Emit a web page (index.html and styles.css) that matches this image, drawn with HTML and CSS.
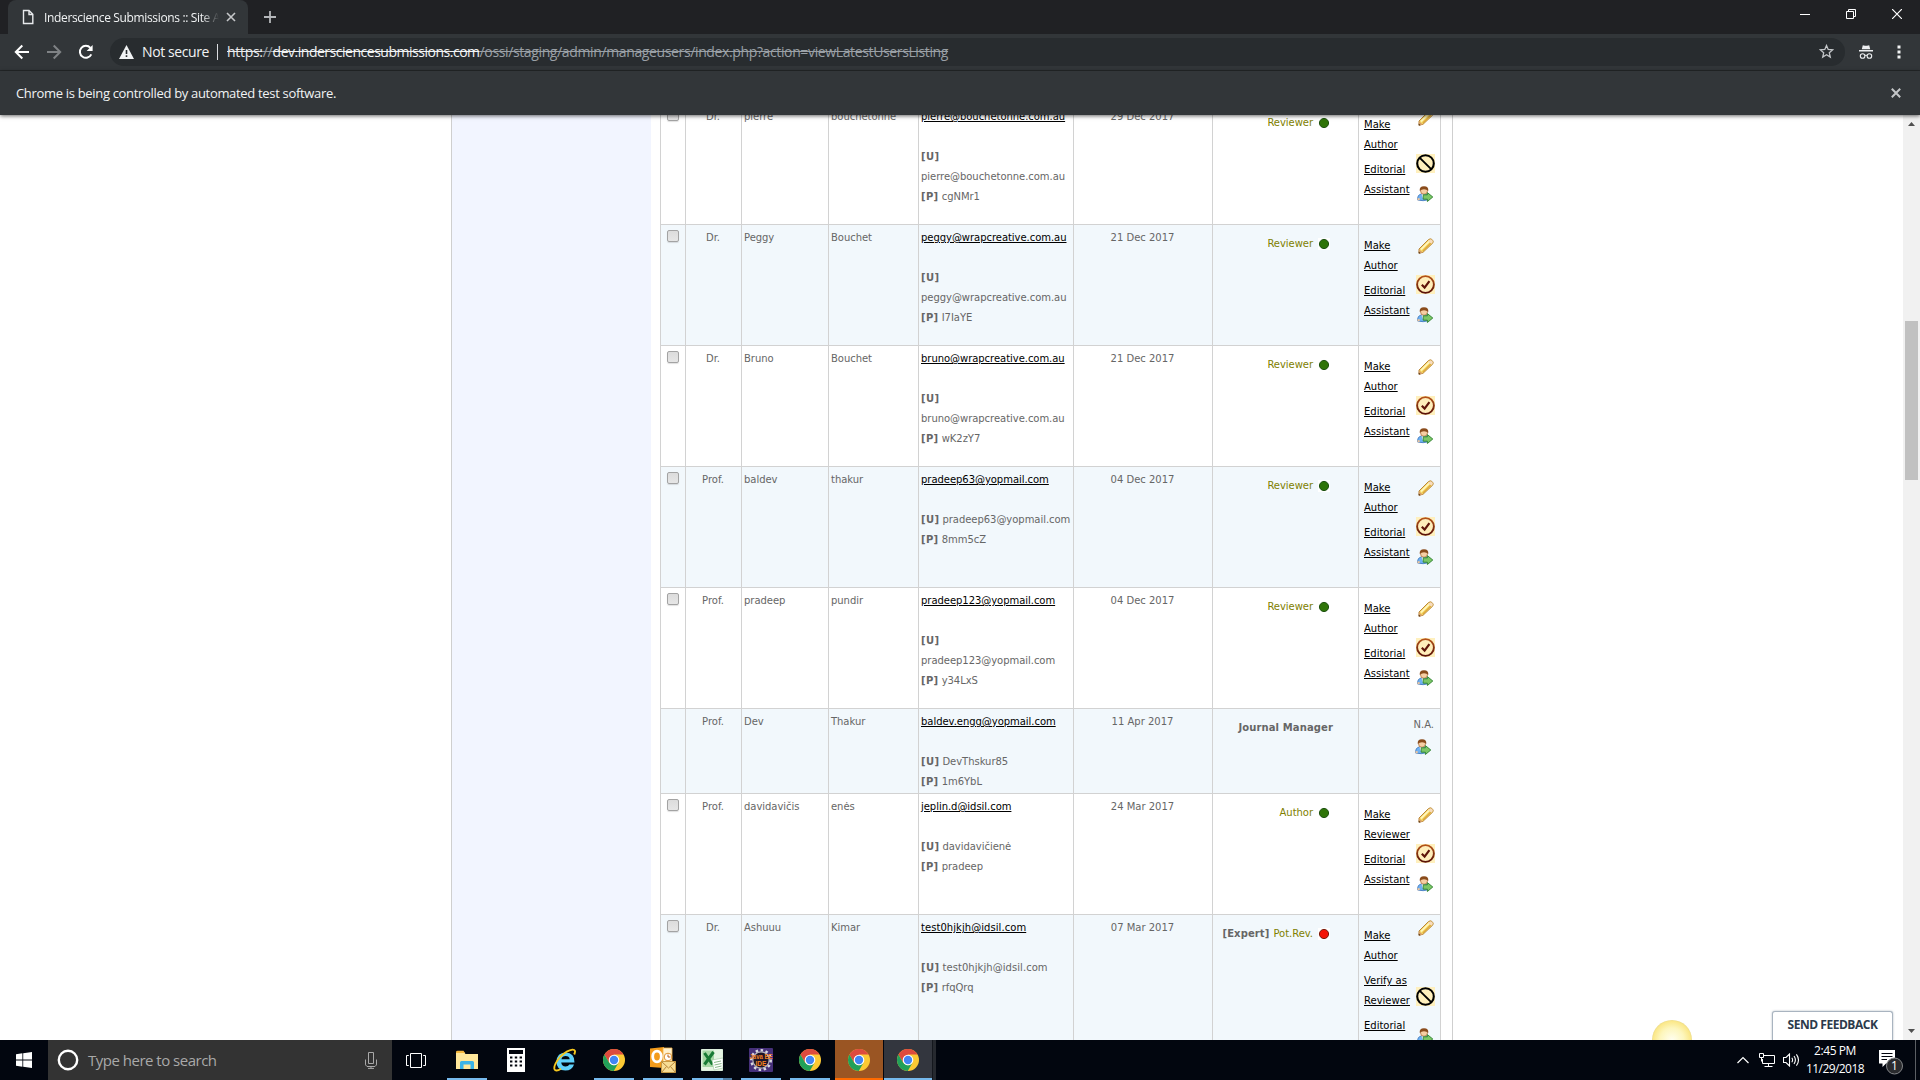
FILE: index.html
```html
<!DOCTYPE html>
<html lang="en">
<head>
<meta charset="utf-8">
<title>Inderscience Submissions :: Site Admin</title>
<link rel="stylesheet" href="styles.css">
</head>
<body>
<svg class="defs" width="0" height="0">
  <defs>
    <linearGradient id="rust" x1="0" y1="0" x2="0" y2="1"><stop offset="0" stop-color="#b5541a"/><stop offset="1" stop-color="#5a1208"/></linearGradient>
    <radialGradient id="sun" cx=".5" cy=".5" r=".5"><stop offset="0" stop-color="#fffef0"/><stop offset=".6" stop-color="#fdf6bd"/><stop offset=".93" stop-color="#fbe88a"/><stop offset="1" stop-color="#ecdc8c"/></radialGradient>
    <symbol id="pencil" viewBox="0 0 16 16">
      <path d="M1 11 10.5 1.5Q12.5.2 14 1.5 16 3 14.8 5L5 14.3 1 15.2z" fill="#f7dc6a" stroke="#b9863a"/>
      <path d="M3 11.5 11 3.5" stroke="#fff7c4" stroke-width="1.6"/><path d="M4.8 13 12.8 5" stroke="#dfa93c" stroke-width="1.2"/>
      <path d="M10.8 2.2Q12.5.8 13.8 1.8 15.4 3 14.4 4.7L13.3 5.6 10 3z" fill="#f7dcc0"/>
      <path d="M1 11.2 4.8 14.6 1 15.5z" fill="#d9a066"/><path d="M.7 13.6 2.6 15.3.7 15.6z" fill="#4a2c10"/>
    </symbol>
    <symbol id="check" viewBox="0 0 19 19">
      <rect width="19" height="19" fill="#fff0bd"/><circle cx="9.5" cy="9.5" r="8.4" fill="#ffeebb" stroke="url(#rust)" stroke-width="1.9"/>
      <path d="M5.8 9.8 8.6 12.6 13.4 6.2" fill="none" stroke="#5e1409" stroke-width="2.2"/>
    </symbol>
    <symbol id="ban" viewBox="0 0 19 19">
      <rect width="19" height="19" fill="#fff0bd"/><circle cx="9.5" cy="9.5" r="8.3" fill="none" stroke="#000" stroke-width="2.1"/><path d="M3.8 3.8 15.2 15.2" stroke="#000" stroke-width="1.9"/>
    </symbol>
    <symbol id="person" viewBox="0 0 16 16">
      <path d="M.6 14Q.2 9 4 8H9.5Q12 8.5 12 13.5 6 15.6.6 14z" fill="#6fb1f2" stroke="#3a72b8" stroke-width=".8"/>
      <path d="M.5 12.2h2.2v2H.5z" fill="#f3c79c"/><path d="M4.5 8.2h4L6.2 13z" fill="#fff"/>
      <circle cx="7" cy="4.8" r="3.5" fill="#f6cfa4" stroke="#a8652f" stroke-width=".7"/>
      <path d="M2.8 5Q2 .2 7 .2 12 .2 11.2 5 10 3.2 7 3.2 4 3.2 2.8 5z" fill="#8a4c1c"/>
      <path d="M6.2 8.8H10.4V6.6L15.8 11 10.4 15.5V13.2H6.2z" fill="#7cc766" stroke="#2f8130" stroke-width=".9"/>
    </symbol>
    <symbol id="green" viewBox="0 0 12 12"><rect width="12" height="12" fill="#fff"/><circle cx="6" cy="6" r="4.6" fill="#2f7408" stroke="#1f5212"/></symbol>
    <symbol id="red" viewBox="0 0 12 12"><rect width="12" height="12" fill="#fff"/><circle cx="6" cy="6" r="4.6" fill="#f51505" stroke="#7a1c0c"/></symbol>
    <symbol id="chrome" viewBox="0 0 24 24">
      <circle cx="12" cy="12" r="11" fill="#fcc934"/>
      <path d="M12 1A11 11 0 0 1 21.6 6.6H12L7.2 14.8 2.4 6.6A11 11 0 0 1 12 1z" fill="#dd4b3e"/>
      <path d="M2.4 6.6 7.3 14.9 12 17.4 16.6 14.6 11.8 23A11 11 0 0 1 2.4 6.6z" fill="#21a05a"/>
      <circle cx="12" cy="12" r="5.3" fill="#fff"/><circle cx="12" cy="12" r="4.2" fill="#4285f4"/>
    </symbol>
  </defs>
</svg>

<div class="tabstrip">
  <div class="tab">
    <svg width="12" height="16" viewBox="0 0 12 16"><path d="M1.5 1.5h5.5l3.8 3.8v9.2H1.5zM7 1.5v4h3.8" fill="none" stroke="#e8eaed" stroke-width="1.4"/></svg>
    <span class="tab-title">Inderscience Submissions :: Site A</span>
    <svg class="tab-close" width="10" height="10" viewBox="0 0 10 10"><path d="M1 1 9 9M9 1 1 9" stroke="#c6c8ca" stroke-width="1.6"/></svg>
  </div>
  <svg class="newtab" width="12" height="12" viewBox="0 0 12 12"><path d="M6 0V12M0 6H12" stroke="#b4b7ba" stroke-width="1.8"/></svg>
  <div class="winbtns">
    <svg width="10" height="10" viewBox="0 0 10 10"><path d="M0 5.5H10" stroke="#fff"/></svg>
    <svg width="10" height="10" viewBox="0 0 10 10"><path d="M.5 2.5h7v7h-7zM2.5 2.5v-2h7v7h-2" fill="none" stroke="#fff"/></svg>
    <svg width="10" height="10" viewBox="0 0 10 10"><path d="M0 0 10 10M10 0 0 10" stroke="#fff" stroke-width="1.2"/></svg>
  </div>
</div>

<div class="toolbar">
  <svg width="16" height="16" viewBox="0 0 16 16"><path d="M15 8H2M8.3 1.5 1.8 8 8.3 14.5" fill="none" stroke="#fff" stroke-width="2"/></svg>
  <svg width="16" height="16" viewBox="0 0 16 16"><path d="M1 8H14M7.7 1.5 14.2 8 7.7 14.5" fill="none" stroke="#7f8285" stroke-width="2"/></svg>
  <svg width="16" height="16" viewBox="0 0 16 16"><path d="M13.3 10.4A6 6 0 1 1 12.4 3.8" fill="none" stroke="#fff" stroke-width="2"/><path d="M14.6 1V7H8.6z" fill="#fff"/></svg>
  <div class="omnibox">
    <svg width="15" height="14" viewBox="0 0 15 14"><path d="M7.5 0 15 14H0z" fill="#f1f3f4"/><path d="M7.5 5V9M7.5 10.2V12" stroke="#282c2f" stroke-width="1.6"/></svg>
    <span class="notsecure">Not secure</span>
    <span class="url"><s class="scheme">https:</s><s class="slashes">//</s><s class="host">dev.indersciencesubmissions.com</s><s class="path">/ossi/staging/admin/manageusers/index.php?action=viewLatestUsersListing</s></span>
    <svg class="star" width="15" height="15" viewBox="0 0 15 15"><path d="M7.5 1.5 9.2 5.5 13.6 5.9 10.3 8.8 11.3 13.1 7.5 10.8 3.7 13.1 4.7 8.8 1.4 5.9 5.8 5.5z" fill="none" stroke="#c3c6c9" stroke-width="1.3"/></svg>
  </div>
  <svg class="incog" width="14" height="14" viewBox="0 0 14 14"><path d="M3.8.2 6 .8H8L10.2.2 11.2 4.2H2.8zM0 5h14v1.5H0z" fill="#eceef0"/><path d="M6 10.5Q7 9.8 8 10.5" fill="none" stroke="#eceef0"/><circle cx="3.6" cy="11" r="2.3" fill="none" stroke="#eceef0" stroke-width="1.1"/><circle cx="10.4" cy="11" r="2.3" fill="none" stroke="#eceef0" stroke-width="1.1"/></svg>
  <svg width="4" height="14" viewBox="0 0 4 14"><path d="M.5.5h3v3h-3zM.5 5.5h3v3h-3zM.5 10.5h3v3h-3z" fill="#f1f3f4"/></svg>
</div>

<div class="infobar">
  <span>Chrome is being controlled by automated test software.</span>
  <svg width="10" height="10" viewBox="0 0 10 10"><path d="M.8.8 9.2 9.2M9.2.8.8 9.2" stroke="#c3c5c7" stroke-width="2"/></svg>
</div>

<div class="viewport">
  <div class="page">
    <div class="sidebar"></div>
    <div class="users">
      <div class="row">
        <div class="sel"><i class="cb"></i></div><div class="mid">Dr.</div><div>pierre</div><div>bouchetonne</div>
        <div><a>pierre@bouchetonne.com.au</a><br><br><b>[U]</b><br>pierre@bouchetonne.com.au<br><b>[P]</b> cgNMr1</div>
        <div class="mid">29 Dec 2017</div>
        <div class="role"><span>Reviewer</span><svg><use href="#green"/></svg></div>
        <div class="act"><div class="links"><a>Make<br>Author</a><a>Editorial<br>Assistant</a></div><div class="icons"><svg class="i16 raised"><use href="#pencil"/></svg><svg class="i19"><use href="#ban"/></svg><svg class="i16"><use href="#person"/></svg></div></div>
      </div>
      <div class="row alt">
        <div class="sel"><i class="cb"></i></div><div class="mid">Dr.</div><div>Peggy</div><div>Bouchet</div>
        <div><a>peggy@wrapcreative.com.au</a><br><br><b>[U]</b><br>peggy@wrapcreative.com.au<br><b>[P]</b> I7IaYE</div>
        <div class="mid">21 Dec 2017</div>
        <div class="role"><span>Reviewer</span><svg><use href="#green"/></svg></div>
        <div class="act"><div class="links"><a>Make<br>Author</a><a>Editorial<br>Assistant</a></div><div class="icons"><svg class="i16"><use href="#pencil"/></svg><svg class="i19"><use href="#check"/></svg><svg class="i16"><use href="#person"/></svg></div></div>
      </div>
      <div class="row">
        <div class="sel"><i class="cb"></i></div><div class="mid">Dr.</div><div>Bruno</div><div>Bouchet</div>
        <div><a>bruno@wrapcreative.com.au</a><br><br><b>[U]</b><br>bruno@wrapcreative.com.au<br><b>[P]</b> wK2zY7</div>
        <div class="mid">21 Dec 2017</div>
        <div class="role"><span>Reviewer</span><svg><use href="#green"/></svg></div>
        <div class="act"><div class="links"><a>Make<br>Author</a><a>Editorial<br>Assistant</a></div><div class="icons"><svg class="i16"><use href="#pencil"/></svg><svg class="i19"><use href="#check"/></svg><svg class="i16"><use href="#person"/></svg></div></div>
      </div>
      <div class="row alt">
        <div class="sel"><i class="cb"></i></div><div class="mid">Prof.</div><div>baldev</div><div>thakur</div>
        <div><a>pradeep63@yopmail.com</a><br><br><b>[U]</b> pradeep63@yopmail.com<br><b>[P]</b> 8mm5cZ</div>
        <div class="mid">04 Dec 2017</div>
        <div class="role"><span>Reviewer</span><svg><use href="#green"/></svg></div>
        <div class="act"><div class="links"><a>Make<br>Author</a><a>Editorial<br>Assistant</a></div><div class="icons"><svg class="i16"><use href="#pencil"/></svg><svg class="i19"><use href="#check"/></svg><svg class="i16"><use href="#person"/></svg></div></div>
      </div>
      <div class="row">
        <div class="sel"><i class="cb"></i></div><div class="mid">Prof.</div><div>pradeep</div><div>pundir</div>
        <div><a>pradeep123@yopmail.com</a><br><br><b>[U]</b><br>pradeep123@yopmail.com<br><b>[P]</b> y34LxS</div>
        <div class="mid">04 Dec 2017</div>
        <div class="role"><span>Reviewer</span><svg><use href="#green"/></svg></div>
        <div class="act"><div class="links"><a>Make<br>Author</a><a>Editorial<br>Assistant</a></div><div class="icons"><svg class="i16"><use href="#pencil"/></svg><svg class="i19"><use href="#check"/></svg><svg class="i16"><use href="#person"/></svg></div></div>
      </div>
      <div class="row alt short">
        <div class="sel"></div><div class="mid">Prof.</div><div>Dev</div><div>Thakur</div>
        <div><a>baldev.engg@yopmail.com</a><br><br><b>[U]</b> DevThskur85<br><b>[P]</b> 1m6YbL</div>
        <div class="mid">11 Apr 2017</div>
        <div class="role manager"><b>Journal Manager</b></div>
        <div class="act na"><span>N.A.</span><svg class="i16"><use href="#person"/></svg></div>
      </div>
      <div class="row">
        <div class="sel"><i class="cb"></i></div><div class="mid">Prof.</div><div>davidavičis</div><div>enės</div>
        <div><a>jeplin.d@idsil.com</a><br><br><b>[U]</b> davidavičienė<br><b>[P]</b> pradeep</div>
        <div class="mid">24 Mar 2017</div>
        <div class="role"><span>Author</span><svg><use href="#green"/></svg></div>
        <div class="act"><div class="links"><a>Make<br>Reviewer</a><a>Editorial<br>Assistant</a></div><div class="icons"><svg class="i16"><use href="#pencil"/></svg><svg class="i19"><use href="#check"/></svg><svg class="i16"><use href="#person"/></svg></div></div>
      </div>
      <div class="row alt tall">
        <div class="sel"><i class="cb"></i></div><div class="mid">Dr.</div><div>Ashuuu</div><div>Kimar</div>
        <div><a class="wide">test0hjkjh@idsil.com</a><br><br><b>[U]</b> <span class="wide">test0hjkjh@idsil.com</span><br><b>[P]</b> rfqQrq</div>
        <div class="mid">07 Mar 2017</div>
        <div class="role"><b>[Expert]</b><span>Pot.Rev.</span><svg><use href="#red"/></svg></div>
        <div class="act"><div class="links"><a>Make<br>Author</a><a>Verify as<br>Reviewer</a><a>Editorial</a></div><div class="icons"><svg class="i16"><use href="#pencil"/></svg><svg class="i19"><use href="#ban"/></svg><svg class="i16"><use href="#person"/></svg></div></div>
      </div>
    </div>
  </div>
  <div class="scrollbar">
    <svg width="17" height="17" viewBox="0 0 17 17"><path d="M5 11 8.5 7 12 11z" fill="#505050"/></svg>
    <div class="thumb"></div>
    <svg class="down" width="17" height="17" viewBox="0 0 17 17"><path d="M5 6 8.5 10 12 6z" fill="#505050"/></svg>
  </div>
  <svg class="sun" width="40" height="20" viewBox="0 0 40 20"><circle cx="20" cy="20" r="20" fill="url(#sun)"/></svg>
  <div class="feedback">SEND FEEDBACK</div>
</div>

<div class="taskbar">
  <div class="start"><svg width="16" height="16" viewBox="0 0 16 16"><path d="M0 2.2 6.4 1.3V7.6H0zM7.2 1.2 16 0V7.6H7.2zM0 8.4H6.4V14.7L0 13.8zM7.2 8.4H16V16L7.2 14.8z" fill="#fff"/></svg></div>
  <div class="search">
    <svg width="22" height="22" viewBox="0 0 22 22"><circle cx="11" cy="11" r="9.2" fill="none" stroke="#fff" stroke-width="2.4"/></svg>
    <span>Type here to search</span>
    <svg width="12" height="17" viewBox="0 0 12 17"><path d="M3.5.5h5v11h-5zM.5 7.5v5.4L2 14.5h8l1.5-1.6V7.5M6 14.5V16M3 16.4H9" fill="none" stroke="#a9a9a9"/></svg>
  </div>
  <div class="slot task"><svg width="20" height="15" viewBox="0 0 20 15"><path d="M4.5.5h11v14h-11zM2.8 2.5H.5v10h2.3M17.2 2.5h2.3v10h-2.3" fill="none" stroke="#fff"/></svg></div>
  <div class="slot run"><svg width="24" height="20" viewBox="0 0 24 20"><path d="M1 2H9l1.5 2H23V19H1z" fill="#ffe79a"/><path d="M1 2.2Q1 .8 2.5.8H8.5L10 3H1z" fill="#f6b73c"/><path d="M5 19V12.5Q5 11 6.5 11h11Q19 11 19 12.5V19H15.5V14.5H8.5V19z" fill="#3cb4e7"/></svg></div>
  <div class="slot"><svg width="18" height="24" viewBox="0 0 18 24"><path d="M0 0h18v24H0z" fill="#fff"/><path d="M2 2h14v4H2z" fill="#02050d"/><path d="M3 9.5h12M3 13.5h12M3 17.5h12" stroke="#02050d" stroke-width="2" stroke-dasharray="2.4 2.4"/></svg></div>
  <div class="slot"><svg width="24" height="24" viewBox="0 0 24 24"><path d="M21.5 14.5H8.2Q8.8 18.4 12.6 18.4 15.3 18.4 16.4 16.4H21Q19.2 22.5 12.4 22.5 3.4 22.2 3.4 13.4 4 4.6 12.6 4.4 21.8 4.8 21.5 14.5zM8.4 11.3H16.7Q16.2 8 12.6 8 9.2 8 8.4 11.3z" fill="#5fd0fa"/><path d="M21.2 6.5Q23.5 1.5 19.5 1.6 14 2.2 7.5 8.5 .6 16.5 1.4 21 2.6 24.2 8 20.8" fill="none" stroke="#f6c71e" stroke-width="1.9"/></svg></div>
  <div class="slot run"><svg width="24" height="24"><use href="#chrome"/></svg></div>
  <div class="slot run"><svg width="26" height="26" viewBox="0 0 26 26"><path d="M0 1.5 14 0V21L0 20z" fill="#f39b1c"/><path d="M13 1H22V21H13z" fill="#fff1cf" stroke="#f0b552" stroke-width=".8"/><ellipse cx="7" cy="9.5" rx="4.3" ry="5.3" fill="none" stroke="#fff" stroke-width="2.8"/><circle cx="18" cy="10" r="3.8" fill="#fff" stroke="#e0912c"/><path d="M18 7.5V10h2.4" stroke="#b55d14" fill="none"/><path d="M11.5 14.5H25.5V25.5H11.5z" fill="#f8dd94" stroke="#c79a45"/><path d="M11.5 14.5 18.5 21 25.5 14.5M11.5 25.5 16.5 19.5M25.5 25.5 20.5 19.5" fill="none" stroke="#b7863a"/></svg></div>
  <div class="slot run excel"><svg width="22" height="22" viewBox="0 0 22 22"><path d="M.5.5h21v21H.5z" fill="#e6f4e3" stroke="#dcefdc"/><path d="M1.5 1.5H13V18H1.5z" fill="#a5d6a4"/><path d="M3.5 4 11.5 15.5M12.5 3 3.5 15.5" stroke="#187a35" stroke-width="3"/><path d="M11 11 22 9V19L13 21z" fill="#fff" stroke="#9fc79f" stroke-width=".6"/><path d="M13 13.5 20 12M13.5 16 20.5 14.5M14 18.5 20.5 17" stroke="#8ab88a"/></svg></div>
  <div class="slot run"><svg width="24" height="24" viewBox="0 0 24 24"><rect width="24" height="24" rx="1" fill="#46307a"/><circle cx="12" cy="12" r="9.7" fill="none" stroke="#d9d9df" stroke-width="2.6" stroke-dasharray="2.5 2.5"/><circle cx="12" cy="12" r="8.2" fill="#1c1428" stroke="#b7b4bd" stroke-width="1.2"/><text class="ee" x="12" y="11" textLength="23" lengthAdjust="spacingAndGlyphs">Java EE</text><text class="ee" x="12" y="17.5" textLength="11" lengthAdjust="spacingAndGlyphs">IDE</text></svg></div>
  <div class="slot run"><svg width="24" height="24"><use href="#chrome"/></svg></div>
  <div class="slot run alert"><svg width="24" height="24"><use href="#chrome"/></svg></div>
  <div class="slot run current"><svg width="24" height="24"><use href="#chrome"/></svg></div>
  <div class="tray">
    <svg width="12" height="8" viewBox="0 0 12 8"><path d="M.5 7 6 1.5 11.5 7" fill="none" stroke="#fff" stroke-width="1.2"/></svg>
    <svg class="net" width="16" height="14" viewBox="0 0 16 14"><path d="M5 2.5h10.5v8H3.5V6M9.5 10.5v2.5M5.5 13.5h8M.5.5h4v4h-4zM2.5 4.5V8.5" fill="none" stroke="#fff"/></svg>
    <svg class="vol" width="17" height="14" viewBox="0 0 17 14"><path d="M.5 4.5H3L6.5 1V13L3 9.5H.5zM8.8 4.8Q10.4 7 8.8 9.2M11 3Q13.8 7 11 11M13.4 1.4Q17.6 7 13.4 12.6" fill="none" stroke="#fff" stroke-width="1.1"/></svg>
    <div class="clock"><span>2:45 PM</span><span class="date">11/29/2018</span></div>
    <div class="notif">
      <svg width="26" height="26" viewBox="0 0 26 26"><path d="M1 1H17V14.5H8L4.5 18V14.5H1z" fill="#fff"/><path d="M3.5 4.5H14.5M3.5 7.5H14.5M3.5 10.5H9" stroke="#02050d"/><circle cx="16.5" cy="17" r="8" fill="#2a2b2e" stroke="#85878a"/></svg>
      <span class="count">1</span>
    </div>
  </div>
</div>
</body>
</html>
```
FILE: styles.css
```css
* { box-sizing: border-box; }
body { margin: 0; width: 1920px; height: 1080px; overflow: hidden; display: flex; flex-direction: column; background: #fff; font-family: "Open Sans", sans-serif; }
svg { display: block; flex: none; }
.defs { position: absolute; }

.tabstrip { height: 34px; background: #202124; display: flex; align-items: flex-start; flex: none; padding-left: 8px; }
.tab { width: 240px; height: 34px; background: #323639; border-radius: 8px 8px 0 0; display: flex; align-items: center; padding: 0 12px 0 14px; }
.tab-title { margin-left: 10px; width: 178px; overflow: hidden; font-size: 12px; letter-spacing: -.352px; white-space: nowrap; color: #f1f3f4; -webkit-mask-image: linear-gradient(90deg, #000 90%, transparent); mask-image: linear-gradient(90deg, #000 90%, transparent); }
.tab-close { margin-left: 7px; }
.newtab { margin: 11px 0 0 16px; }
.winbtns { margin-left: auto; display: flex; gap: 36px; padding: 9px 18px 0 0; }

.toolbar { height: 37px; background: #323639; border-bottom: 1px solid #25282a; display: flex; align-items: center; flex: none; padding-left: 14px; padding-bottom: 1px; }
.toolbar > svg { margin-right: 16px; }
.omnibox { width: 1735px; height: 28px; margin: 0; border-radius: 14px; background: #282c2f; display: flex; align-items: center; padding-left: 9px; font-size: 14px; line-height: 20px; color: #f1f3f4; white-space: nowrap; }
.notsecure { margin-left: 8px; width: 75px; letter-spacing: -.4px; }
.url { border-left: 1px solid #dadce0; padding-left: 9px; height: 16px; line-height: 16px; color: #9aa0a6; display: flex; }
.scheme { color: #e8eaed; letter-spacing: -.3px; }
.slashes { letter-spacing: -.2px; }
.host { color: #f1f3f4; letter-spacing: -.482px; }
.path { letter-spacing: -.37px; }
.star { margin: 0 11px 0 auto; }
.toolbar > .incog { margin: 0 24px 0 14px; }

.infobar { height: 44px; background: #323639; display: flex; align-items: center; justify-content: space-between; flex: none; padding: 0 19px 0 16px; font-size: 13px; letter-spacing: -.32px; color: #f1f3f4; position: relative; z-index: 2; box-shadow: 0 1px 4px rgba(0,0,0,.6); }

.viewport { height: 925px; flex: none; position: relative; overflow: hidden; display: flex; justify-content: space-between; background: #fff; }
.page { width: 1002px; margin-left: 451px; border: solid #cfcfcf; border-width: 0 1px; display: flex; align-items: flex-start; }
.sidebar { width: 199px; height: 925px; background: #f2f5ff; }
.users { margin: -12px 0 0 9px; border: 1px solid #d2d2d2; border-width: 1px 0 0 1px; font: 10px/20px "DejaVu Sans", Verdana, sans-serif; letter-spacing: -.04px; color: #666; white-space: nowrap; }
.row { display: grid; grid-template-columns: 25px 56px 87px 90px 155px 139px 146px 82px; height: 121px; border-bottom: 1px solid #d2d2d2; }
.row.short { height: 85px; }
.row.tall { height: 145px; }
.alt { background: #f2f8fc; }
.row > div { border-right: 1px solid #d2d2d2; padding: 3px 2px 0; }
.row > .mid { text-align: center; padding-right: 3px; letter-spacing: 0; }
.users a { color: #000; text-decoration: underline; }
.users b { letter-spacing: .35px; }
.users .wide { letter-spacing: .06px; }
.row > .sel { padding: 5px 0 0 6px; }
.cb { display: block; width: 12px; height: 12px; border: 1px solid #a3a3a3; border-radius: 2px; background: linear-gradient(#dcdcdc, #e6e6e6); box-shadow: 0 1px 1px rgba(0,0,0,.12); }
.row > .role { display: flex; justify-content: flex-end; padding: 9px 28px 0 0; color: #808000; }
.role span { margin-right: 1px; }
.role b { color: #666; margin-right: 4px; letter-spacing: .115px; }
.role svg { width: 12px; height: 12px; margin: 4px 0 0 4px; }
.row > .manager { padding-right: 21px; }
.row > .act { display: flex; justify-content: space-between; padding: 11px 5px 0; letter-spacing: 0; }
.links { display: flex; flex-direction: column; gap: 5px; }
.icons { display: flex; flex-direction: column; align-items: center; padding-top: 2px; width: 19px; }
.i16 { width: 16px; height: 16px; }
.i19 { width: 19px; height: 19px; margin: 21px 0 13px; }
.icons .i16:last-child { margin-left: -1px; }
.raised { margin: -7px 0 7px; }
.tall .icons { padding-top: 0; margin-top: -6px; }
.tall .i19 { margin: 51px 0 22px; }
.row > .na { flex-direction: column; justify-content: flex-start; align-items: flex-end; padding: 6px 6px 0 0; }
.na svg { margin: 4px 3px 0 0; }

.scrollbar { width: 17px; background: #f1f1f1; display: flex; flex-direction: column; align-items: center; }
.thumb { width: 13px; height: 159px; margin-top: 189px; background: #c1c1c1; }
.down { margin-top: auto; }
.sun { position: absolute; left: 1652px; bottom: 0; }
.feedback { position: absolute; left: 1772px; bottom: 0; width: 121px; height: 29px; border: 1px solid #a9b4c0; border-bottom: 0; border-radius: 3px 3px 0 0; background: #fff; box-shadow: 0 0 2px rgba(80,100,120,.5); font-size: 12px; line-height: 26px; font-weight: 700; letter-spacing: -.458px; color: #2c3a4b; text-align: center; }

.taskbar { height: 40px; background: #02060f; display: flex; flex: none; }
.start { width: 48px; display: flex; align-items: center; justify-content: center; }
.search { width: 344px; background: #333; display: flex; align-items: center; padding: 0 15px 0 9px; font-size: 15px; letter-spacing: -.5px; color: #a9a9a9; }
.search span { margin: 0 auto 0 9px; }
.slot { width: 48px; margin-right: 1px; display: flex; align-items: center; justify-content: center; position: relative; }
.task { margin-right: 3px; }
.run::after { content: ""; position: absolute; left: 4px; right: 4px; bottom: 0; height: 2px; background: #76b9ed; }
.excel::after { background: linear-gradient(90deg, #76b9ed 31px, #4f7da3 31px); }
.alert { background: #9a5523; }
.alert::after { left: 0; right: 0; background: #ff6a00; }
.current { background: #33363e; box-shadow: 1px 0 #14171d, 4px 0 #26292f; }
.current::after { left: 0; right: 0; }
.ee { font: 700 7px "Liberation Sans", sans-serif; fill: #f58220; text-anchor: middle; }
.tray { margin-left: auto; display: flex; align-items: center; color: #fff; border-right: 1px solid #5b5e63; margin-right: 4px; }
.net { margin-left: 10px; }
.vol { margin-left: 8px; }
.clock { width: 70px; display: flex; flex-direction: column; align-items: center; font-size: 12px; line-height: 18px; letter-spacing: -.411px; }
.date { letter-spacing: -.57px; }
.notif { position: relative; margin: 4px 11px 0 8px; }
.count { position: absolute; left: 13px; top: 8px; font-size: 12px; line-height: 17px; }
```
